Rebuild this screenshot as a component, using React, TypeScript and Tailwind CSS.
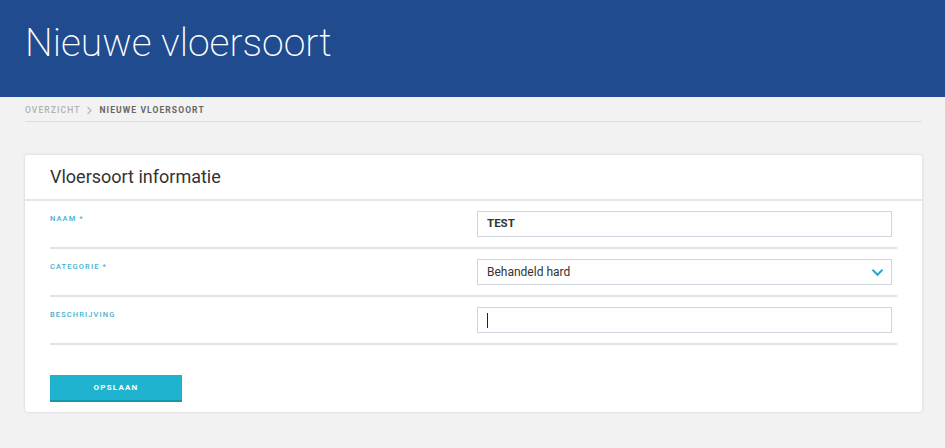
const rows = [
  { label: 'NAAM *', kind: 'text', value: 'TEST' },
  { label: 'CATEGORIE *', kind: 'select', value: 'Behandeld hard' },
  { label: 'BESCHRIJVING', kind: 'cursor', value: '' },
]

export default function App() {
  return (
    <div className="min-h-[448px] bg-[#f2f2f2] font-['Roboto',sans-serif]">
      {/* Header */}
      <div className="h-[97px] bg-[#214b8f] pl-[25px] pt-[22px]">
        <h1 className="text-[39px] leading-[42px] font-extralight text-white">Nieuwe vloersoort</h1>
      </div>

      {/* Breadcrumb */}
      <div className="ml-[25px] mr-[23px] flex h-[25px] items-center gap-[6px] border-b border-[#dedede] pt-[3px] text-[8.5px] font-medium tracking-[1.1px]">
        <span className="text-[#b0b0b0]">OVERZICHT</span>
        <svg width="7" height="9" viewBox="0 0 7 9" className="text-[#b5b5b5]">
          <path d="M1.5 1 L5 4.5 L1.5 8" fill="none" stroke="currentColor" strokeWidth="1.1" />
        </svg>
        <span className="font-bold text-[#666]">NIEUWE VLOERSOORT</span>
      </div>

      {/* Card */}
      <div className="ml-[25px] mr-[23px] mt-[33px] rounded-[3px] bg-white shadow-[0_0_3px_rgba(0,0,0,0.15)]">
        <div className="flex h-[46px] items-center border-b-2 border-[#e6e6e6] px-[25px] pb-[2px]">
          <h2 className="text-[18px] text-[#333]">Vloersoort informatie</h2>
        </div>

        <div className="px-[25px] pb-[10px]">
          {rows.map((row) => (
            <div key={row.label} className="flex border-b-2 border-[#e3e3e3] py-[10px]">
              <div className="w-[427px] pt-[2px] text-[7.5px] font-medium tracking-[1.1px] text-[#45afd2]">
                {row.label}
              </div>
              <div className="mr-[5px] flex h-[26px] flex-1 items-center justify-between border border-[#cfd6df] pl-[9px] pr-[7px] text-[12px] text-[#333]">
                {row.kind === 'text' && <span className="text-[11.5px] font-bold">{row.value}</span>}
                {row.kind === 'select' && (
                  <>
                    <span>{row.value}</span>
                    <svg width="13" height="9" viewBox="0 0 13 9" className="text-[#2aa8c8]">
                      <path d="M1.5 1.8 L6.5 6.8 L11.5 1.8" fill="none" stroke="currentColor" strokeWidth="2" />
                    </svg>
                  </>
                )}
                {row.kind === 'cursor' && <span className="h-[15px] w-px bg-[#222]" />}
              </div>
            </div>
          ))}

          <button className="mt-[30px] h-[27px] w-[132px] border-b-2 border-[#1697ae] bg-[#1fb3cf] text-[8px] font-bold tracking-[1.2px] text-white">
            OPSLAAN
          </button>
        </div>
      </div>
    </div>
  )
}
